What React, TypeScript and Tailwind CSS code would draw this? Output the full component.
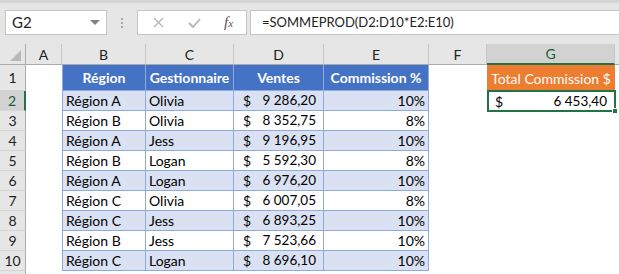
import React from "react";

const rows = [
  ["Région A", "Olivia", "9 286,20", "10%"],
  ["Région B", "Olivia", "8 352,75", "8%"],
  ["Région A", "Jess", "9 196,95", "10%"],
  ["Région B", "Logan", "5 592,30", "8%"],
  ["Région A", "Logan", "6 976,20", "10%"],
  ["Région C", "Olivia", "6 007,05", "8%"],
  ["Région C", "Jess", "6 893,25", "10%"],
  ["Région B", "Jess", "7 523,66", "10%"],
  ["Région C", "Logan", "8 696,10", "10%"],
];

const cols = ["A", "B", "C", "D", "E", "F", "G"];

const tbl = "border-r border-b border-[#8ea9db]";

// french thousands separator is a narrow no-break space
const fr = (s: string) => s.replace(" ", "\u202F");

const App = () => {
  return (
    <div className="h-[274px] w-[619px] overflow-hidden bg-white font-['Lato',sans-serif] text-[14px] text-black">
      {/* toolbar */}
      <div className="flex h-[44px] items-start border-t-[3px] border-[#d5d5d5] bg-[#e6e6e6] pt-[7px]">
        <div className="ml-[5px] flex h-[25px] w-[102px] items-center justify-between border border-[#c6c6c6] bg-white pl-[6px] pr-[6px] text-[15px] text-[#222]">
          <span>G2</span>
          <span className="h-0 w-0 border-x-[5px] border-t-[5px] border-x-transparent border-t-[#808080]" />
        </div>
        <div className="ml-[14px] flex h-[25px] flex-col items-center justify-center gap-[2px]">
          <span className="h-[2px] w-[2px] bg-[#a8a8a8]" />
          <span className="h-[2px] w-[2px] bg-[#a8a8a8]" />
          <span className="h-[2px] w-[2px] bg-[#a8a8a8]" />
        </div>
        <div className="ml-[14px] flex h-[25px] w-[110px] items-center border border-[#c6c6c6] bg-white">
          <svg className="ml-[15px]" width="11" height="11" viewBox="0 0 11 11">
            <path d="M1 1L10 10M10 1L1 10" stroke="#b4b4b4" strokeWidth="1.3" fill="none" />
          </svg>
          <svg className="ml-[24px]" width="13" height="10" viewBox="0 0 13 10">
            <path d="M1 5L5 9L12 1" stroke="#b4b4b4" strokeWidth="1.8" fill="none" />
          </svg>
          <span className="ml-[23px] font-['Liberation_Serif',serif] text-[15px] italic text-[#555]">
            f<span className="text-[11px]">x</span>
          </span>
        </div>
        <div className="ml-[3px] flex h-[25px] flex-1 items-center border border-r-0 border-[#c6c6c6] bg-white pl-[11px] text-[13px] text-[#222]">
          =SOMMEPROD(D2:D10*E2:E10)
        </div>
      </div>

      {/* sheet */}
      <div className="grid grid-cols-[26px_36px_84px_88px_90px_105px_58px_128px_1fr] grid-rows-[21px_26px_repeat(10,20px)]">
        {/* corner */}
        <div className="flex items-end justify-end border-r border-b border-[#ababab] bg-[#e6e6e6] pb-[3px] pr-[4px]">
          <span className="h-0 w-0 border-b-[11px] border-l-[11px] border-b-[#b9b9b9] border-l-transparent" />
        </div>
        {cols.map((c) =>
          c === "G" ? (
            <div
              key={c}
              className="flex items-center justify-center border-r border-b-2 border-r-[#c8c8c8] border-b-[#217346] bg-[#d2d2d2] text-[#1e5c38]"
            >
              {c}
            </div>
          ) : (
            <div
              key={c}
              className="flex items-center justify-center border-r border-b border-r-[#c8c8c8] border-b-[#ababab] bg-[#e6e6e6] text-[#222]"
            >
              {c}
            </div>
          )
        )}
        <div className="border-b border-[#ababab] bg-[#e6e6e6]" />

        {/* row 1 */}
        <div className="flex items-center justify-center border-r border-b border-r-[#ababab] border-b-[#d4d4d4] bg-[#e6e6e6] text-[#222]">
          1
        </div>
        <div />
        <div className={`flex items-center justify-center border-l bg-[#4472c4] font-bold text-white ${tbl}`}>
          Région
        </div>
        <div className={`flex items-center justify-center bg-[#4472c4] font-bold text-white ${tbl}`}>
          Gestionnaire
        </div>
        <div className={`flex items-center justify-center bg-[#4472c4] font-bold text-white ${tbl}`}>
          Ventes
        </div>
        <div className={`flex items-center justify-center bg-[#4472c4] font-bold text-white ${tbl}`}>
          Commission %
        </div>
        <div />
        <div className="flex items-center justify-center bg-[#ed7d31] text-[14px] text-white">
          Total Commission $
        </div>
        <div />

        {rows.map((r, i) => {
          const n = i + 2;
          const band = i % 2 === 0 ? "bg-[#d9e1f2]" : "bg-white";
          return (
            <React.Fragment key={n}>
              {n === 2 ? (
                <div className="flex items-center justify-center border-r-2 border-b border-r-[#217346] border-b-[#d4d4d4] bg-[#d2d2d2] text-[#1e5c38]">
                  {n}
                </div>
              ) : (
                <div className="flex items-center justify-center border-r border-b border-r-[#ababab] border-b-[#d4d4d4] bg-[#e6e6e6] text-[#222]">
                  {n}
                </div>
              )}
              <div />
              <div className={`flex items-center border-l pl-[3px] ${band} ${tbl}`}>{r[0]}</div>
              <div className={`flex items-center pl-[3px] ${band} ${tbl}`}>{r[1]}</div>
              <div className={`flex items-center justify-between pl-[9px] pr-[7px] ${band} ${tbl}`}>
                <span>$</span>
                <span className="text-[13.5px] tracking-[-0.3px]">{fr(r[2])}</span>
              </div>
              <div className={`flex items-center justify-end pr-[3px] ${band} ${tbl}`}>{r[3]}</div>
              <div />
              {n === 2 ? (
                <div className="relative flex items-center justify-between pl-[8px] pr-[8px]">
                  <span>$</span>
                  <span className="text-[13.5px] tracking-[-0.3px]">{fr("6 453,40")}</span>
                  <span className="absolute -top-[1px] left-0 -right-[1px] -bottom-[1px] border-2 border-[#217346]" />
                  <span className="absolute -right-[3px] -bottom-[3px] h-[6px] w-[6px] border border-white bg-[#217346]" />
                </div>
              ) : (
                <div />
              )}
              <div />
            </React.Fragment>
          );
        })}

        {/* row 11 */}
        <div className="border-r border-[#ababab] bg-[#e6e6e6]" />
      </div>
    </div>
  );
};

export default App;
